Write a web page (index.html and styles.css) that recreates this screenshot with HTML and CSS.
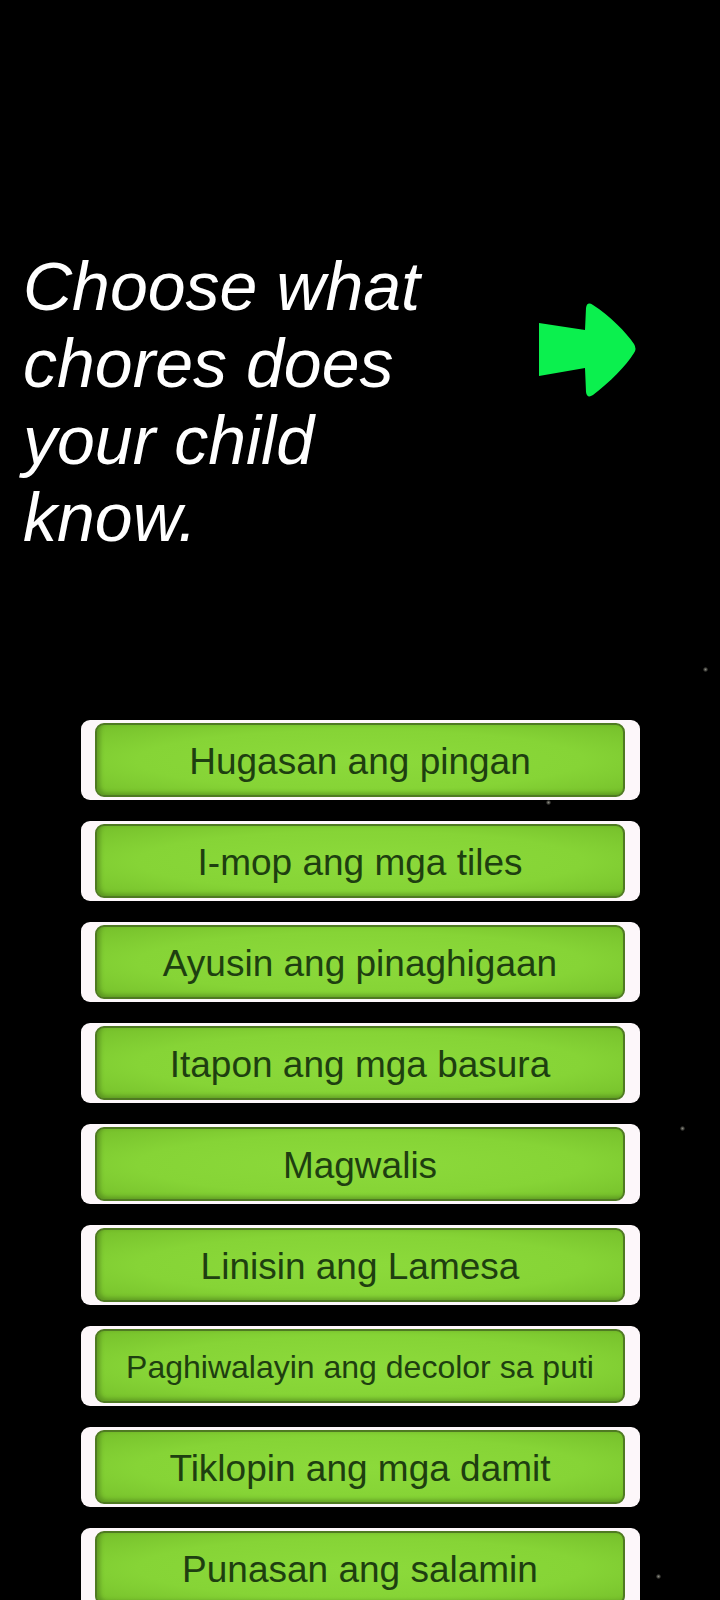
FILE: index.html
```html
<!DOCTYPE html>
<html lang="tl">
<head>
  <meta charset="UTF-8" />
  <meta name="viewport" content="width=device-width, initial-scale=1" />
  <title>Chores</title>
  <link rel="stylesheet" href="styles.css">
</head>
<body>

  <div class="screen">
    <div class="header">
      <div class="title">Choose what chores does your child know.</div>
      <div class="next">
        <svg width="100" height="100" viewBox="0 0 100 100">
          <path d="M1 23 L47 30 L48 8 Q49 1 55 5 C72 16 88 32 96 44 Q99 49 96 53 C88 66 72 82 55 95 Q49 99 48 92 L47 68 L1 76 Z" fill="#0bf04e"/>
        </svg>
      </div>
    </div>

    <div class="chores">
      <div class="chore"><div class="chore-inner">Hugasan ang pingan</div></div>
      <div class="chore"><div class="chore-inner">I-mop ang mga tiles</div></div>
      <div class="chore"><div class="chore-inner">Ayusin ang pinaghigaan</div></div>
      <div class="chore"><div class="chore-inner">Itapon ang mga basura</div></div>
      <div class="chore"><div class="chore-inner">Magwalis</div></div>
      <div class="chore"><div class="chore-inner">Linisin ang Lamesa</div></div>
      <div class="chore"><div class="chore-inner small">Paghiwalayin ang decolor sa puti</div></div>
      <div class="chore"><div class="chore-inner">Tiklopin ang mga damit</div></div>
      <div class="chore"><div class="chore-inner">Punasan ang salamin</div></div>
    </div>

    <div class="dot" style="left: 703px; top: 667px;"></div>
    <div class="dot" style="left: 546px; top: 800px;"></div>
    <div class="dot" style="left: 680px; top: 1126px;"></div>
    <div class="dot" style="left: 656px; top: 1574px;"></div>
  </div>

</body>
</html>
```

FILE: styles.css
```css
* {
  box-sizing: border-box;
  margin: 0;
  padding: 0;
}

body {
  background: #000;
  font-family: 'Liberation Sans', Arial, sans-serif;
  width: 720px;
  height: 1600px;
  overflow: hidden;
}

.screen {
  position: relative;
  height: 1600px;
}

.header {
  display: flex;
  align-items: flex-start;
  padding-top: 248px;
  padding-left: 23px;
  height: 720px;
}

.title {
  width: 470px;
  color: #fff;
  font-size: 68px;
  font-style: italic;
  line-height: 77px;
}

.next {
  margin-top: 52px;
  margin-left: 45px;
  width: 100px;
  height: 100px;
}

.chores {
  display: flex;
  flex-direction: column;
  gap: 21px;
  padding-left: 81px;
}

.chore {
  width: 559px;
  height: 80px;
  background: #fdf7fa;
  border-radius: 9px;
  padding: 3px 15px 3px 14px;
}

.chore-inner {
  height: 100%;
  border: 2px solid #4f7a22;
  border-radius: 9px;
  background: radial-gradient(ellipse at center, #8cda3b 0%, #86d436 60%, #76c02b 100%);
  box-shadow: inset 3px -2px 4px rgba(60, 100, 20, 0.45);
  display: flex;
  justify-content: center;
  align-items: center;
  color: #1e3f10;
  font-size: 37px;
  padding-top: 3px;
}

.chore-inner.small {
  font-size: 32px;
}

.dot {
  position: absolute;
  width: 5px;
  height: 5px;
  border-radius: 50%;
  background: radial-gradient(circle, #8a8a80 0%, rgba(80, 80, 70, 0) 80%);
}
```
